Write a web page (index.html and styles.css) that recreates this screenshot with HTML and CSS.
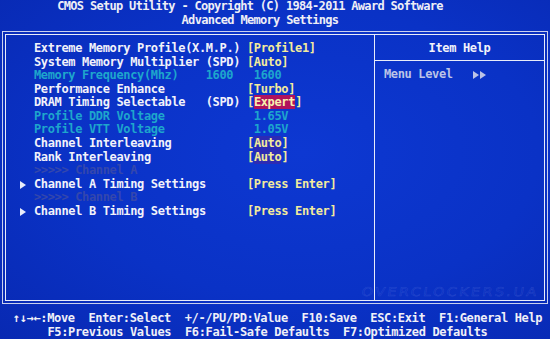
FILE: index.html
```html
<!DOCTYPE html>
<html>
<head>
<meta charset="utf-8">
<link rel="stylesheet" href="styles.css">
</head>
<body>
<div class="screen">
  <header class="head">
    <div class="t1">CMOS Setup Utility - Copyright (C) 1984-2011 Award Software</div>
    <div class="t2">Advanced Memory Settings</div>
  </header>
  <div class="frame">
    <div class="inner">
      <div class="left">
        <div class="row"><span class="lbl wide">Extreme Memory Profile(X.M.P.)</span><span class="val">[Profile1]</span></div>
        <div class="row"><span class="lbl">System Memory Multiplier</span><span class="mid">(SPD)</span><span class="val">[Auto]</span></div>
        <div class="row cyan"><span class="lbl">Memory Frequency(Mhz)</span><span class="mid">1600</span><span class="val"> 1600</span></div>
        <div class="row"><span class="lbl wide">Performance Enhance</span><span class="val">[Turbo]</span></div>
        <div class="row"><span class="lbl">DRAM Timing Selectable</span><span class="mid">(SPD)</span><span class="val">[<span class="sel">Expert</span>]</span></div>
        <div class="row cyan"><span class="lbl wide">Profile DDR Voltage</span><span class="val"> 1.65V</span></div>
        <div class="row cyan"><span class="lbl wide">Profile VTT Voltage</span><span class="val"> 1.05V</span></div>
        <div class="row"><span class="lbl wide">Channel Interleaving</span><span class="val">[<span class="hl">Auto</span>]</span></div>
        <div class="row"><span class="lbl wide">Rank Interleaving</span><span class="val">[<span class="hl">Auto</span>]</span></div>
        <div class="row dim"><span class="lbl wide">&gt;&gt;&gt;&gt;&gt; Channel A</span></div>
        <div class="row"><span class="arrow"></span><span class="lbl wide">Channel A Timing Settings</span><span class="val">[Press Enter]</span></div>
        <div class="row dim"><span class="lbl wide">&gt;&gt;&gt;&gt;&gt; Channel B</span></div>
        <div class="row"><span class="arrow"></span><span class="lbl wide">Channel B Timing Settings</span><span class="val">[Press Enter]</span></div>
      </div>
      <div class="help">
        <div class="help-title">Item Help</div>
        <div class="help-body"><span class="ml">Menu Level</span><span class="dbl"><span class="tri"></span><span class="tri"></span></span></div>
      </div>
    </div>
    <div class="wm">OVERCLOCKERS.UA</div>
  </div>
  <footer class="foot">
    <div class="f1">↑↓→←:Move  Enter:Select  +/-/PU/PD:Value  F10:Save  ESC:Exit  F1:General Help</div>
    <div class="f2">F5:Previous Values  F6:Fail-Safe Defaults  F7:Optimized Defaults</div>
  </footer>
</div>
</body>
</html>
```

FILE: styles.css
```css
html, body {
  margin: 0;
  padding: 0;
}
body {
  width: 550px;
  height: 339px;
  overflow: hidden;
  background: #0a30c2;
}
.screen {
  width: 550px;
  height: 339px;
  background: radial-gradient(ellipse at 55% 45%, #0d38d2 0%, #0a32c6 55%, #0829b2 100%);
  font-family: "DejaVu Sans Mono", "Liberation Mono", monospace;
  font-weight: bold;
  font-size: 12px;
  color: #f2f2fa;
  letter-spacing: -0.35px;
  display: flex;
  flex-direction: column;
}
.head {
  flex: none;
  height: 27px;
  line-height: 13.5px;
  text-align: center;
  color: #eeeef6;
  letter-spacing: -0.69px;
}
.t1, .t2 { white-space: pre; }
.t1 { padding-right: 50px; }
.t2 { padding-right: 30px; }
.frame {
  flex: none;
  position: relative;
  margin: 4px 2px 0 2px;
  height: 273px;
  box-sizing: border-box;
  border: 1px solid #c9d0ee;
  padding: 2px;
}
.inner {
  height: 100%;
  box-sizing: border-box;
  border: 1px solid #e8ecfa;
  display: flex;
}
.left {
  flex: none;
  width: 368px;
  box-sizing: border-box;
  padding: 7px 0 0 28px;
  line-height: 13.58px;
}
.row {
  display: flex;
  white-space: pre;
  height: 13.58px;
  position: relative;
}
.lbl { width: 171.75px; flex: none; }
.lbl.wide { width: 213px; }
.mid { width: 41.25px; flex: none; }
.val { color: #f3eb9c; }
.cyan, .cyan .val { color: #1ea6cc; }
.dim { color: #3447ad; }
.sel {
  background: #b0125c;
  color: #f8f0b0;
}
.hl { background: #2c2bb4; }
.arrow {
  position: absolute;
  left: -14px;
  top: 3px;
  width: 0;
  height: 0;
  border-top: 4px solid transparent;
  border-bottom: 4px solid transparent;
  border-left: 6px solid #e8ecfa;
}
.help {
  flex: 1;
  border-left: 1px solid #e8ecfa;
  display: flex;
  flex-direction: column;
}
.help-title {
  height: 25px;
  line-height: 26px;
  text-align: center;
  border-bottom: 1px solid #e8ecfa;
}
.help-body {
  padding: 7px 0 0 9px;
  line-height: 13.5px;
  color: #bcc3e6;
  display: flex;
  align-items: center;
  white-space: pre;
}
.ml { width: 89px; }
.dbl { display: flex; gap: 1px; }
.tri {
  width: 0;
  height: 0;
  border-top: 4px solid transparent;
  border-bottom: 4px solid transparent;
  border-left: 6px solid #bcc3e6;
}
.wm {
  position: absolute;
  right: 10px;
  bottom: 4px;
  font-family: "DejaVu Sans", sans-serif;
  font-weight: normal;
  font-size: 12px;
  letter-spacing: 2px;
  color: transparent;
  -webkit-text-stroke: 0.5px rgba(120, 140, 230, 0.25);
  transform: scaleX(1.2) skewX(-8deg);
  transform-origin: right bottom;
  white-space: nowrap;
}
.foot {
  flex: none;
  margin-top: 7px;
  line-height: 14px;
  text-align: center;
  color: #f0f0f8;
}
.f1, .f2 { white-space: pre; }
.f1 { padding-left: 5px; }
.f2 { padding-right: 15px; }
```
